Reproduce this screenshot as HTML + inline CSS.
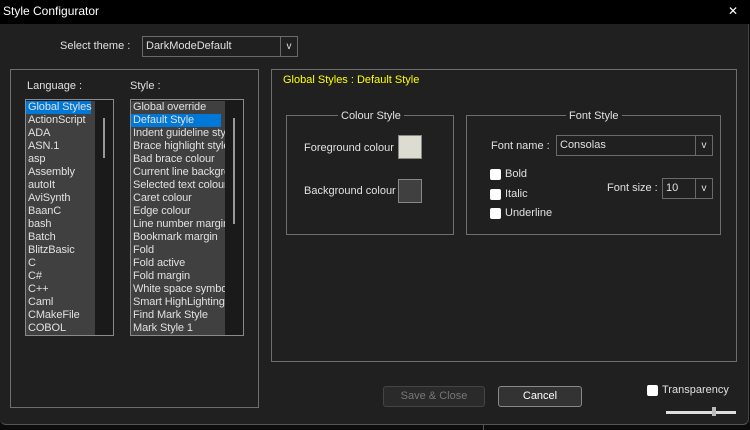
<!DOCTYPE html><html><head><style>
body{margin:0;width:750px;height:430px;background:#0c0c0c;font-family:"Liberation Sans",sans-serif;font-size:11px;color:#e0e0e0;position:relative;overflow:hidden}
.a{position:absolute}
.win{left:0;top:0;width:748px;height:424px;background:#202020;border-bottom:1px solid #555;border-right:1px solid #444;border-radius:0 0 6px 6px}
.bar{left:0;top:0;width:750px;height:24px;background:#000;color:#fff;font-size:12px}
.box{border:1px solid #6e6e6e}
.list{background:#1a1a1a;border:1px solid #8a8a8a;overflow:hidden}
.inner{position:absolute;left:0;top:1px;bottom:0;background:#404040;overflow:hidden}
.inner div{height:13px;line-height:13px;padding-left:2px;white-space:nowrap;font-size:11px;letter-spacing:-0.1px}
.sel{background:#0078d7}
.cb{border:1px solid #6a6a6a;background:#202020;height:19px;line-height:19px;padding-left:3px}
.cb span{position:absolute;right:0;top:0;width:16px;border-left:1px solid #6a6a6a;text-align:center;font-size:10px}
.chk{width:11px;height:11px;background:#fff;border-radius:2px}
.btn{border:1px solid #888;border-radius:3px;text-align:center;line-height:19px;height:19px;background:#333}
</style></head><body>
<div class="a win"></div>
<div class="a" style="left:483px;top:425px;width:1px;height:5px;background:#555"></div>
<div class="a bar"><span class="a" style="left:3px;top:4px">Style Configurator</span><span class="a" style="left:728px;top:4px;font-size:12px">✕</span></div>
<div class="a" style="left:60px;top:40px">Select theme :</div>
<div class="a cb" style="left:142px;top:36px;width:151px">DarkModeDefault<span>v</span></div>
<div class="a box" style="left:10px;top:69px;width:247px;height:337px"></div>
<div class="a" style="left:27px;top:80px">Language :</div>
<div class="a" style="left:130px;top:80px">Style :</div>
<div class="a list" style="left:25px;top:99px;width:87px;height:235px"><div style="position:absolute;left:77px;top:18px;width:2px;height:40px;background:#999"></div>
<div class="inner" style="width:69px"><div class="sel" style="width:63px">Global Styles</div><div>ActionScript</div><div>ADA</div><div>ASN.1</div><div>asp</div><div>Assembly</div><div>autoIt</div><div>AviSynth</div><div>BaanC</div><div>bash</div><div>Batch</div><div>BlitzBasic</div><div>C</div><div>C#</div><div>C++</div><div>Caml</div><div>CMakeFile</div><div>COBOL</div></div></div>
<div class="a list" style="left:130px;top:99px;width:112px;height:235px"><div style="position:absolute;left:102px;top:18px;width:2px;height:106px;background:#999"></div>
<div class="inner" style="width:94px"><div>Global override</div><div class="sel" style="width:88px">Default Style</div><div>Indent guideline style</div><div>Brace highlight style</div><div>Bad brace colour</div><div>Current line background</div><div>Selected text colour</div><div>Caret colour</div><div>Edge colour</div><div>Line number margin</div><div>Bookmark margin</div><div>Fold</div><div>Fold active</div><div>Fold margin</div><div>White space symbol</div><div>Smart HighLighting</div><div>Find Mark Style</div><div>Mark Style 1</div></div></div>
<div class="a box" style="left:271px;top:69px;width:464px;height:291px"></div>
<div class="a" style="left:283px;top:74px;color:#ffff00">Global Styles : Default Style</div>
<div class="a box" style="left:286px;top:115px;width:166px;height:118px"></div>
<div class="a" style="left:338px;top:110px;background:#202020;padding:0 3px">Colour Style</div>
<div class="a" style="left:304px;top:142px">Foreground colour</div>
<div class="a" style="left:398px;top:135px;width:24px;height:24px;background:#dcdcd0;border:1px solid #888;box-sizing:border-box"></div>
<div class="a" style="left:304px;top:185px">Background colour</div>
<div class="a" style="left:398px;top:179px;width:24px;height:24px;background:#404040;border:1px solid #888;box-sizing:border-box"></div>
<div class="a box" style="left:466px;top:115px;width:253px;height:118px"></div>
<div class="a" style="left:566px;top:110px;background:#202020;padding:0 3px">Font Style</div>
<div class="a" style="left:491px;top:140px">Font name :</div>
<div class="a cb" style="left:556px;top:135px;width:152px">Consolas<span>v</span></div>
<div class="a chk" style="left:490px;top:169px"></div><div class="a" style="left:505px;top:168px">Bold</div>
<div class="a chk" style="left:490px;top:189px"></div><div class="a" style="left:505px;top:188px">Italic</div>
<div class="a chk" style="left:490px;top:208px"></div><div class="a" style="left:505px;top:207px">Underline</div>
<div class="a" style="left:607px;top:182px">Font size :</div>
<div class="a cb" style="left:662px;top:178px;width:46px">10<span>v</span></div>
<div class="a btn" style="left:383px;top:386px;width:100px;color:#777;border-color:#444;background:#2a2a2a">Save &amp; Close</div>
<div class="a btn" style="left:498px;top:386px;width:82px;color:#fff">Cancel</div>
<div class="a chk" style="left:647px;top:385px"></div><div class="a" style="left:662px;top:384px">Transparency</div>
<div class="a" style="left:666px;top:411px;width:70px;height:3px;background:#ddd"></div>
<div class="a" style="left:712px;top:407px;width:4px;height:9px;background:#bbb"></div>
</body></html>
